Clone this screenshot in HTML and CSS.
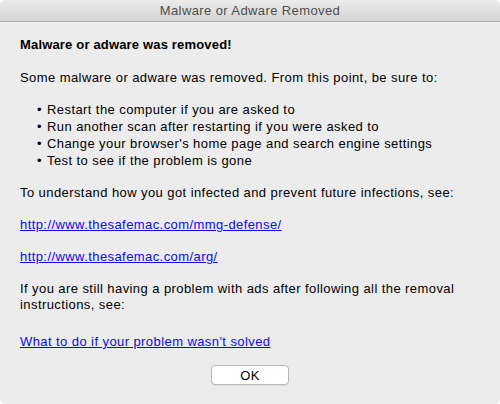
FILE: index.html
```html
<!DOCTYPE html>
<html>
<head>
<meta charset="utf-8">
<link rel="stylesheet" href="styles.css">
</head>
<body>
<div class="window">
  <div class="titlebar">Malware or Adware Removed</div>
  <div class="content">
    <p class="heading">Malware or adware was removed!</p>
    <p class="para intro">Some malware or adware was removed. From this point, be sure to:</p>
    <ul class="steps">
      <li>Restart the computer if you are asked to</li>
      <li>Run another scan after restarting if you were asked to</li>
      <li>Change your browser's home page and search engine settings</li>
      <li>Test to see if the problem is gone</li>
    </ul>
    <p class="para after-list">To understand how you got infected and prevent future infections, see:</p>
    <p class="para"><a href="#">http://www.thesafemac.com/mmg-defense/</a></p>
    <p class="para"><a href="#">http://www.thesafemac.com/arg/</a></p>
    <p class="para">If you are still having a problem with ads after following all the removal instructions, see:</p>
    <p class="para last"><a href="#">What to do if your problem wasn't solved</a></p>
    <div class="actions"><button class="btn">OK</button></div>
  </div>
</div>
</body>
</html>
```
FILE: styles.css
```css
html, body {
  margin: 0;
  padding: 0;
  background: #ffffff;
}
body {
  font-family: "Liberation Sans", Arial, sans-serif;
  font-size: 13px;
  color: #000;
}
.window {
  width: 500px;
  height: 404px;
  background: #ececec;
  border-radius: 5px;
  overflow: hidden;
  display: flex;
  flex-direction: column;
}
.titlebar {
  height: 21px;
  line-height: 21px;
  text-align: center;
  color: #4d4d4d;
  letter-spacing: 0.4px;
  background: linear-gradient(#ebebeb, #d5d5d5);
  border-bottom: 1px solid #b0b0b0;
  flex: none;
}
.content {
  padding: 15px 20px 0 20px;
  line-height: 16px;
  letter-spacing: 0.42px;
}
.heading {
  margin: 0;
  font-weight: bold;
  letter-spacing: 0.17px;
}
.para {
  margin: 16px 0 0 0;
}
.intro {
  margin-top: 17px;
}
.steps {
  margin: 15px 0 0 0;
  padding: 0 0 0 17px;
  list-style: none;
  line-height: 17px;
}
.steps li {
  position: relative;
  padding-left: 10px;
}
.steps li::before {
  content: "\2022";
  position: absolute;
  left: 0;
  top: 0;
}
.after-list {
  margin-top: 16px;
}
.last {
  margin-top: 21px;
}
a {
  color: #0a0aee;
  text-decoration: underline;
}
.actions {
  display: flex;
  justify-content: center;
  margin-top: 15px;
}
.btn {
  width: 78px;
  height: 20px;
  background: #fff;
  border: 1px solid #b8b8b8;
  border-radius: 4px;
  font-family: "Liberation Sans", Arial, sans-serif;
  font-size: 13px;
  letter-spacing: 0.3px;
  color: #000;
  padding: 0;
  box-shadow: 0 1px 0 rgba(0,0,0,0.05);
}
```
